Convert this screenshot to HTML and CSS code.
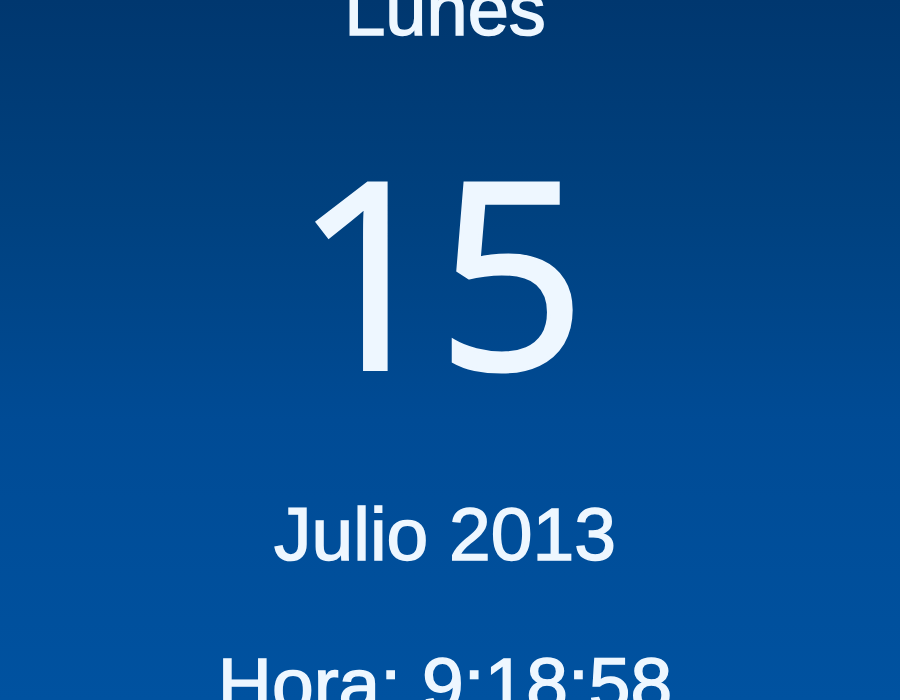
FILE: index.html
```html
<!DOCTYPE html>
<html lang="es">
<head>
<meta charset="utf-8">
<title>Calendario</title>
<link rel="stylesheet" href="styles.css">
</head>
<body>
<div class="widget">
  <div class="day-name">Lunes</div>
  <div class="day-number">15</div>
  <div class="month-year">Julio 2013</div>
  <div class="time">Hora: 9:18:58</div>
</div>
</body>
</html>
```
FILE: styles.css
```css
html, body {
  margin: 0;
  padding: 0;
}
body {
  background: #003a75;
}
.widget {
  width: 900px;
  height: 700px;
  overflow: hidden;
  display: flex;
  flex-direction: column;
  align-items: center;
  background: linear-gradient(to bottom, #00376f 0%, #00417f 30%, #004b95 60%, #0052a0 100%);
  color: #eef7ff;
  font-family: "Liberation Sans", Arial, sans-serif;
  white-space: nowrap;
}
.day-name {
  font-size: 74px;
  line-height: 74px;
  margin-top: -27px;
  padding-right: 10px;
  -webkit-text-stroke: 1.5px #eef7ff;
}
.day-number {
  font-family: "Open Sans", "Liberation Sans", sans-serif;
  font-size: 260px;
  line-height: 262px;
  margin-top: 90px;
  letter-spacing: -6px;
  padding-right: 26px;
  -webkit-text-stroke: 4px #eef7ff;
}
.month-year {
  font-size: 75px;
  line-height: 75px;
  margin-top: 98px;
  padding-right: 10px;
  -webkit-text-stroke: 1.5px #eef7ff;
}
.time {
  font-size: 75px;
  line-height: 75px;
  margin-top: 75px;
  padding-right: 10px;
  -webkit-text-stroke: 1.5px #eef7ff;
}
```
